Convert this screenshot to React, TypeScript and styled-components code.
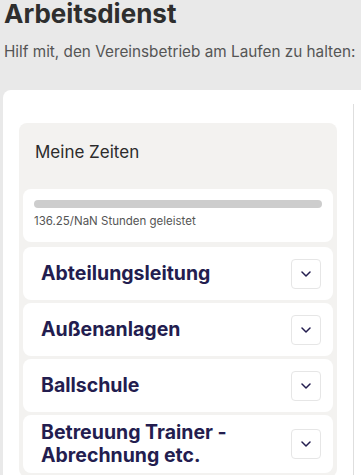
import React from 'react';
import styled, { createGlobalStyle } from 'styled-components';

const GlobalStyle = createGlobalStyle`
  html, body {
    margin: 0;
    padding: 0;
    background: #e9e9e9;
    font-family: Inter, "Noto Sans", sans-serif;
    overflow: hidden;
  }
`;

const Page = styled.div`
  padding: 0 0 0 3px;
`;

const Title = styled.h1`
  margin: 0 0 0 1px;
  font-size: 26px;
  line-height: 28px;
  font-weight: 700;
  color: #2e2e2e;
`;

const Subtitle = styled.p`
  margin: 13px 0 0 1px;
  font-size: 15.3px;
  line-height: 21px;
  color: #555;
  white-space: nowrap;
`;

const Card = styled.div`
  margin-top: 28px;
  background: #fff;
  border-radius: 8px 0 0 0;
  padding: 14px 0 0 16px;
  display: flex;
  gap: 16px;
  min-height: 400px;
`;

const MainColumn = styled.div`
  width: 318px;
  padding-top: 19px;
  flex-shrink: 0;
`;

const SideColumn = styled.div`
  flex: 1;
  border-left: 1px solid #dedede;
`;

const Panel = styled.section`
  background: #f3f2f0;
  border-radius: 8px;
  padding: 0 4px 4px;
  display: flex;
  flex-direction: column;
  gap: 3px;
`;

const PanelHeader = styled.h2`
  margin: 0;
  padding: 17px 12px 22px;
  font-size: 17px;
  line-height: 24px;
  font-weight: 400;
  color: #2b2b2b;
`;

const Box = styled.div`
  background: #fff;
  border-radius: 8px;
`;

const ProgressBox = styled(Box)`
  padding: 11px 11px 13px;
  margin-bottom: 2px;
`;

const Bar = styled.div`
  height: 8px;
  border-radius: 4px;
  background: #cdcdcd;
`;

const ProgressText = styled.div`
  margin-top: 5px;
  font-size: 11.5px;
  line-height: 16px;
  color: #555;
`;

const Item = styled(Box)`
  display: flex;
  align-items: center;
  justify-content: space-between;
  min-height: 53px;
  padding: 6px 12px 6px 18px;
  box-sizing: border-box;
`;

const ItemTitle = styled.h3`
  margin: 0;
  font-size: 19.5px;
  line-height: 23px;
  font-weight: 700;
  color: #231d4f;
`;

const Toggle = styled.button`
  width: 30px;
  height: 30px;
  flex-shrink: 0;
  border: 1px solid #e6e6e6;
  border-radius: 4px;
  background: #fff;
  display: flex;
  align-items: center;
  justify-content: center;
  padding: 0;
  color: #231d4f;
`;

const Chevron = () => (
  <svg width="10" height="6" viewBox="0 0 10 6" fill="none">
    <path d="M1 1l4 4 4-4" stroke="currentColor" strokeWidth="1.5" strokeLinecap="round" strokeLinejoin="round" />
  </svg>
);

const categories = ['Abteilungsleitung', 'Außenanlagen', 'Ballschule', 'Betreuung Trainer - Abrechnung etc.'];

export default function App() {
  return (
    <Page>
      <GlobalStyle />
      <Title>Arbeitsdienst</Title>
      <Subtitle>Hilf mit, den Vereinsbetrieb am Laufen zu halten:</Subtitle>
      <Card>
        <MainColumn>
          <Panel>
            <PanelHeader>Meine Zeiten</PanelHeader>
            <ProgressBox>
              <Bar />
              <ProgressText>136.25/NaN Stunden geleistet</ProgressText>
            </ProgressBox>
            {categories.map((c) => (
              <Item key={c}>
                <ItemTitle>{c === categories[3] ? <>Betreuung Trainer -<br />Abrechnung etc.</> : c}</ItemTitle>
                <Toggle>
                  <Chevron />
                </Toggle>
              </Item>
            ))}
          </Panel>
        </MainColumn>
        <SideColumn />
      </Card>
    </Page>
  );
}
